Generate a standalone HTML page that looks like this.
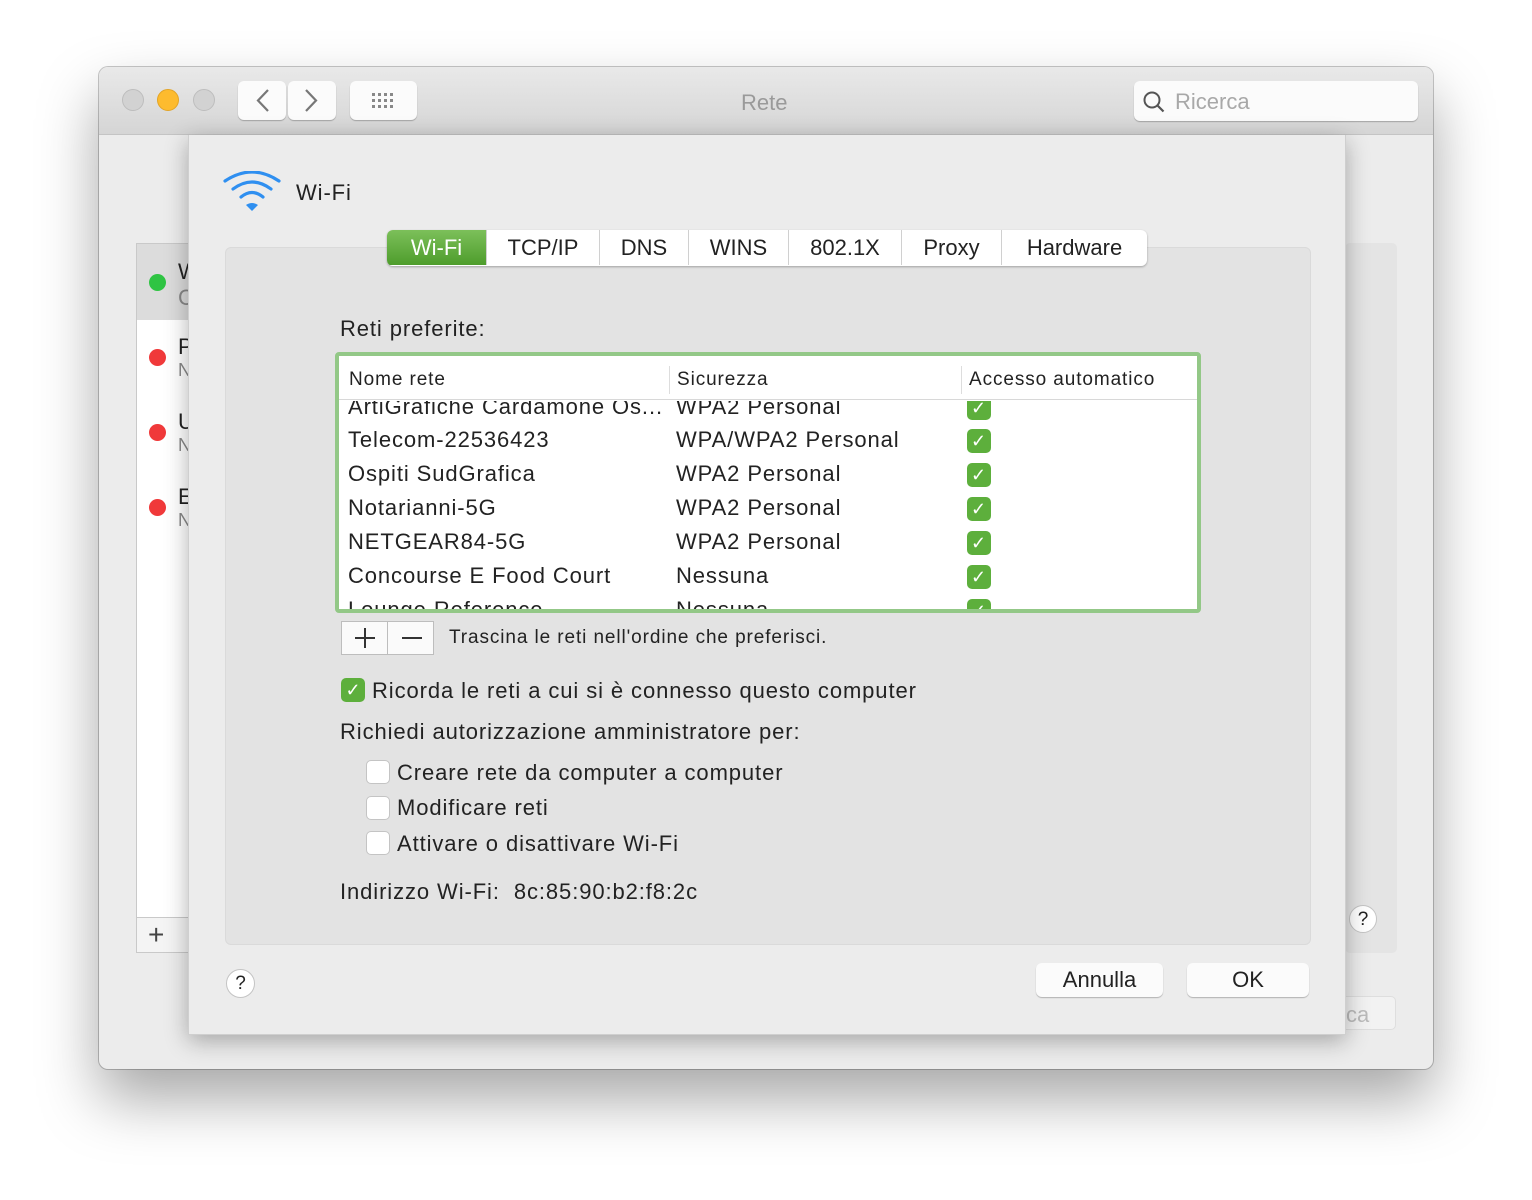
<!DOCTYPE html>
<html><head><meta charset="utf-8"><style>
*{margin:0;padding:0;box-sizing:border-box}
body{width:1532px;height:1200px;background:#fff;font-family:"Liberation Sans",sans-serif;color:#222;position:relative;overflow:hidden}
.a{position:absolute}
.win{left:99px;top:67px;width:1334px;height:1002px;border-radius:9px;background:#ececec;box-shadow:0 30px 60px rgba(0,0,0,.35),0 0 0 1px #c8c8c8;overflow:hidden}
.tb{left:0;top:0;width:1334px;height:68px;background:linear-gradient(#e9e9e9,#d5d5d5);border-bottom:1px solid #c4c4c4}
.dot{width:22px;height:22px;border-radius:50%;top:22px;background:#d2d2d2;border:1px solid #bdbdbd}
.btn{background:#fbfbfb;border-radius:6px;box-shadow:0 1px 1px rgba(0,0,0,.25);}
.t{white-space:nowrap;font-size:22px}
.s{letter-spacing:.9px}
.cb{width:24px;height:24px;border-radius:5px;background:#5daf3c;color:#fff;font-size:18px;text-align:center;line-height:24px}
.ucb{width:24px;height:24px;border-radius:5px;background:#fff;border:1px solid #c4c4c4}
.tab{top:0;height:35px;line-height:35px;text-align:center;font-size:22px;border-right:1px solid #d0d0d0}
</style></head><body>
<div class="a win">
 <div class="a tb">
  <div class="a dot" style="left:23px"></div>
  <div class="a dot" style="left:58px;background:#fdbb2e;border-color:#e3a425"></div>
  <div class="a dot" style="left:94px"></div>
  <div class="a btn" style="left:139px;top:14px;width:48px;height:39px"></div>
  <div class="a btn" style="left:189px;top:14px;width:48px;height:39px"></div>
  <svg class="a" style="left:139px;top:14px" width="98" height="39"><path d="M30 9L20 19.5 30 30M68 9l10 10.5L68 30" fill="none" stroke="#777" stroke-width="2.2"/></svg>
  <div class="a btn" style="left:251px;top:14px;width:67px;height:39px"></div>
  <svg class="a" style="left:251px;top:14px" width="67" height="39"><g fill="#888"><rect x="22" y="12" width="3" height="3"/><rect x="28" y="12" width="3" height="3"/><rect x="34" y="12" width="3" height="3"/><rect x="40" y="12" width="3" height="3"/><rect x="22" y="18" width="3" height="3"/><rect x="28" y="18" width="3" height="3"/><rect x="34" y="18" width="3" height="3"/><rect x="40" y="18" width="3" height="3"/><rect x="22" y="24" width="3" height="3"/><rect x="28" y="24" width="3" height="3"/><rect x="34" y="24" width="3" height="3"/><rect x="40" y="24" width="3" height="3"/></g></svg>
  <div class="a t" style="left:642px;top:23px;color:#9a9a9a">Rete</div>
  <div class="a btn" style="left:1035px;top:14px;width:284px;height:40px"></div>
  <svg class="a" style="left:1043px;top:23px" width="26" height="26"><circle cx="10" cy="10" r="7.5" fill="none" stroke="#555" stroke-width="2"/><path d="M15.5 15.5l6 6" stroke="#555" stroke-width="2.2"/></svg>
  <div class="a t" style="left:1076px;top:22px;color:#a8a8a8">Ricerca</div>
 </div>
 <div class="a" style="left:37px;top:176px;width:60px;height:710px;background:#fff;border:1px solid #c9c9c9"></div>
 <div class="a" style="left:38px;top:177px;width:60px;height:76px;background:#dcdcdc"></div>
 <div class="a" style="left:50px;top:207px;width:17px;height:17px;border-radius:50%;background:#2fc443"></div>
 <div class="a" style="left:50px;top:282px;width:17px;height:17px;border-radius:50%;background:#f0393a"></div>
 <div class="a" style="left:50px;top:357px;width:17px;height:17px;border-radius:50%;background:#f0393a"></div>
 <div class="a" style="left:50px;top:432px;width:17px;height:17px;border-radius:50%;background:#f0393a"></div>
 <div class="a t" style="left:79px;top:192px">W</div><div class="a t" style="left:79px;top:218px;color:#888">C</div>
 <div class="a t" style="left:79px;top:267px">P</div><div class="a t" style="left:79px;top:293px;color:#888;font-size:18px">N</div>
 <div class="a t" style="left:79px;top:342px">U</div><div class="a t" style="left:79px;top:368px;color:#888;font-size:18px">N</div>
 <div class="a t" style="left:79px;top:417px">E</div><div class="a t" style="left:79px;top:443px;color:#888;font-size:18px">N</div>
 <div class="a" style="left:37px;top:850px;width:60px;height:36px;background:#f4f4f4;border:1px solid #c9c9c9"></div>
 <div class="a t" style="left:49px;top:852px;font-size:28px;color:#444">+</div>
 <div class="a" style="left:1246px;top:176px;width:52px;height:710px;background:#e4e4e4;border-radius:5px"></div>
 <div class="a" style="left:1250px;top:838px;width:28px;height:28px;border-radius:50%;background:#fff;border:1px solid #c4c4c4;text-align:center;line-height:27px;font-size:19px">?</div>
 <div class="a" style="left:1230px;top:929px;width:67px;height:34px;background:#f2f2f2;border-radius:5px;border:1px solid #dedede"></div>
 <div class="a t" style="left:1247px;top:935px;color:#bbb">ca</div>
</div>

<div class="a" style="left:188px;top:135px;width:1158px;height:900px;background:#ececec;box-shadow:0 6px 22px rgba(0,0,0,.3);border:1px solid #cfcfcf;border-top:none">
 <svg class="a" style="left:34px;top:36px" width="60" height="44"><g fill="none" stroke="#2f8ff0" stroke-width="3.2" stroke-linecap="round"><path d="M2 10Q29 -8 56 10"/><path d="M10 18Q29 4 48 18"/><path d="M18 26Q29 17 40 26"/></g><path d="M23 34Q29 30 35 34L29 40Z" fill="#2f8ff0"/></svg>
 <div class="a t s" style="left:107px;top:45px">Wi-Fi</div>
 <div class="a" style="left:36px;top:112px;width:1086px;height:698px;background:#e3e3e3;border-radius:6px;border:1px solid #dadada"></div>
 <div class="a" style="left:198px;top:95px;width:760px;height:36px;background:#fff;border-radius:6px;box-shadow:0 1px 2px rgba(0,0,0,.3);overflow:hidden">
  <div class="a tab" style="left:0;width:100px;background:linear-gradient(#7cc05a,#4e9d2c);color:#fff">Wi-Fi</div>
  <div class="a tab" style="left:100px;width:113px">TCP/IP</div>
  <div class="a tab" style="left:213px;width:89px">DNS</div>
  <div class="a tab" style="left:302px;width:100px">WINS</div>
  <div class="a tab" style="left:402px;width:113px">802.1X</div>
  <div class="a tab" style="left:515px;width:100px">Proxy</div>
  <div class="a tab" style="left:615px;width:145px;border:none">Hardware</div>
 </div>
 <div class="a t s" style="left:151px;top:181px">Reti preferite:</div>
 <div class="a" style="left:146px;top:217px;width:866px;height:261px;border:4px solid #93c887;border-radius:4px;background:#fff;overflow:hidden">
  <div class="a" style="left:0;top:0;width:858px;height:44px;border-bottom:1px solid #d8d8d8;background:#fff"></div>
  <div class="a" style="left:330px;top:10px;width:1px;height:28px;background:#ddd"></div>
  <div class="a" style="left:622px;top:10px;width:1px;height:28px;background:#ddd"></div>
  <div class="a t s" style="left:10px;top:13px;font-size:19px">Nome rete</div>
  <div class="a t s" style="left:338px;top:13px;font-size:19px">Sicurezza</div>
  <div class="a t s" style="left:630px;top:13px;font-size:19px">Accesso automatico</div>
  <div class="a s" style="left:0;top:45px;width:858px;height:210px;overflow:hidden">
   <div class="a t" style="left:9px;top:-7px">ArtiGrafiche Cardamone Os...</div><div class="a t" style="left:337px;top:-7px">WPA2 Personal</div><div class="a cb" style="left:628px;top:-5px">✓</div>
   <div class="a t" style="left:9px;top:26px">Telecom-22536423</div><div class="a t" style="left:337px;top:26px">WPA/WPA2 Personal</div><div class="a cb" style="left:628px;top:28px">✓</div>
   <div class="a t" style="left:9px;top:60px">Ospiti SudGrafica</div><div class="a t" style="left:337px;top:60px">WPA2 Personal</div><div class="a cb" style="left:628px;top:62px">✓</div>
   <div class="a t" style="left:9px;top:94px">Notarianni-5G</div><div class="a t" style="left:337px;top:94px">WPA2 Personal</div><div class="a cb" style="left:628px;top:96px">✓</div>
   <div class="a t" style="left:9px;top:128px">NETGEAR84-5G</div><div class="a t" style="left:337px;top:128px">WPA2 Personal</div><div class="a cb" style="left:628px;top:130px">✓</div>
   <div class="a t" style="left:9px;top:162px">Concourse E Food Court</div><div class="a t" style="left:337px;top:162px">Nessuna</div><div class="a cb" style="left:628px;top:164px">✓</div>
   <div class="a t" style="left:9px;top:196px">Lounge Reference</div><div class="a t" style="left:337px;top:196px">Nessuna</div><div class="a cb" style="left:628px;top:198px">✓</div>
  </div>
 </div>
 <div class="a" style="left:152px;top:486px;width:93px;height:34px;background:#fafafa;border:1px solid #bdbdbd"></div>
 <div class="a" style="left:198px;top:486px;width:1px;height:34px;background:#bdbdbd"></div>
 <div class="a" style="left:166px;top:502px;width:20px;height:2px;background:#333"></div>
 <div class="a" style="left:175px;top:493px;width:2px;height:20px;background:#333"></div>
 <div class="a" style="left:213px;top:502px;width:20px;height:2px;background:#333"></div>
 <div class="a t s" style="left:260px;top:492px;font-size:19px">Trascina le reti nell'ordine che preferisci.</div>
 <div class="a cb" style="left:152px;top:543px">✓</div>
 <div class="a t s" style="left:183px;top:543px">Ricorda le reti a cui si è connesso questo computer</div>
 <div class="a t s" style="left:151px;top:584px">Richiedi autorizzazione amministratore per:</div>
 <div class="a ucb" style="left:177px;top:625px"></div><div class="a t s" style="left:208px;top:625px">Creare rete da computer a computer</div>
 <div class="a ucb" style="left:177px;top:661px"></div><div class="a t s" style="left:208px;top:660px">Modificare reti</div>
 <div class="a ucb" style="left:177px;top:696px"></div><div class="a t s" style="left:208px;top:696px">Attivare o disattivare Wi-Fi</div>
 <div class="a t s" style="left:151px;top:744px">Indirizzo Wi-Fi:&nbsp; 8c:85:90:b2:f8:2c</div>
 <div class="a" style="left:37px;top:834px;width:29px;height:29px;border-radius:50%;background:#fff;border:1px solid #c4c4c4;text-align:center;line-height:28px;font-size:19px">?</div>
 <div class="a btn" style="left:847px;top:828px;width:127px;height:34px;text-align:center;line-height:34px;font-size:22px">Annulla</div>
 <div class="a btn" style="left:998px;top:828px;width:122px;height:34px;text-align:center;line-height:34px;font-size:22px">OK</div>
</div>
</body></html>
